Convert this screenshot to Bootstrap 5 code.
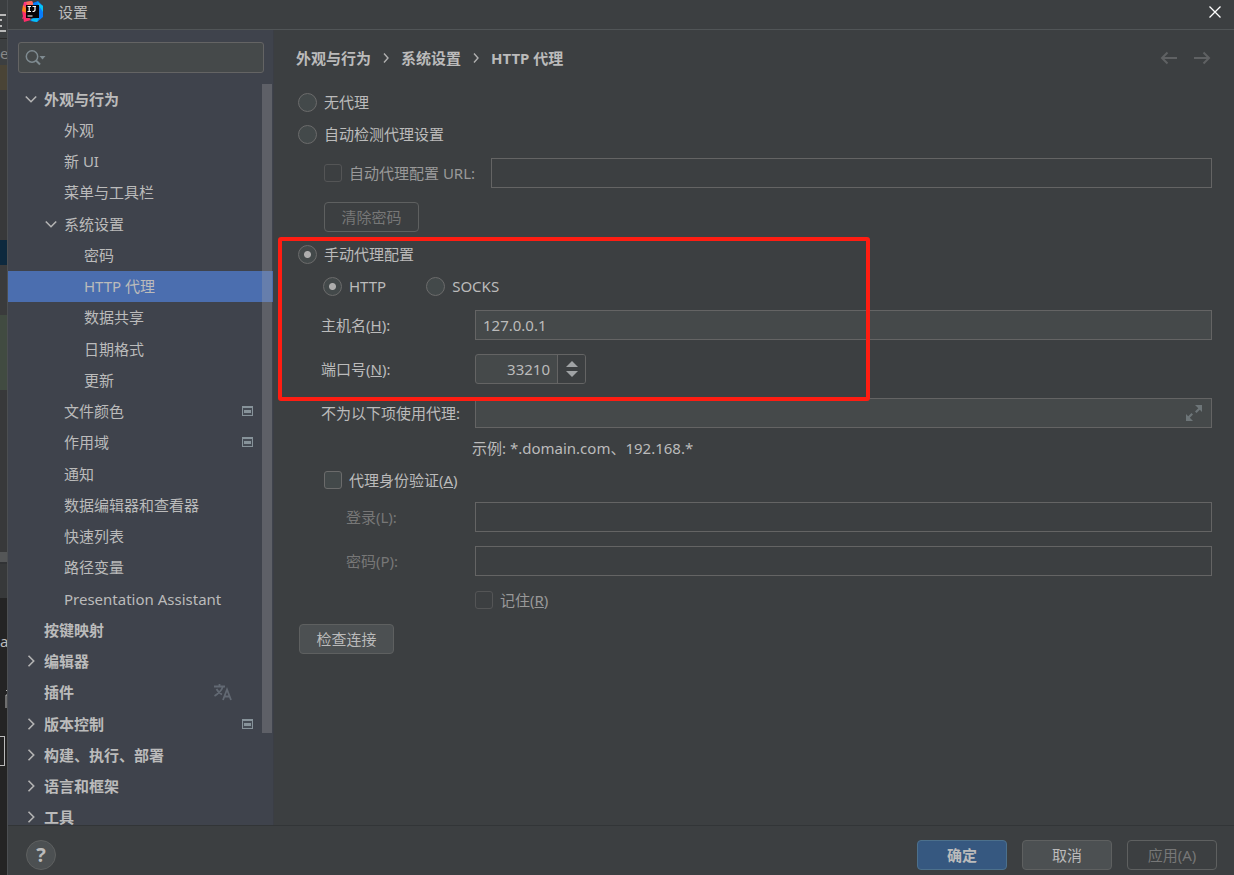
<!DOCTYPE html>
<html lang="zh-CN">
<head>
<meta charset="utf-8">
<meta name="viewport" content="width=device-width, initial-scale=1">
<title>设置</title>
<link href="https://cdn.jsdelivr.net/npm/bootstrap@5.3.0/dist/css/bootstrap.min.css" rel="stylesheet">
<style>
  :root { --panel: #3c3f41; --field: #45494a; --line: #646464; --ink: #bbbbbb; --dim: #777777; }
  body { background: var(--panel); color: var(--ink); font: 15px/20px "Noto Sans", "Noto Sans CJK SC", sans-serif; }
  svg { display: block; flex: none; }

  /* editor window peeking out behind the dialog */
  .editor-edge { width: 7px; background: #242424; overflow: hidden; }
  .editor-edge > div { flex: none; overflow: hidden; }
  .edge-box { height: 30px; width: 5px; border: solid #bbb; border-width: 1px 1px 1px 0; }

  .dialog-pane { border-left: 1px solid #4c4f52; min-width: 0; }
  .title-bar { height: 30px; border-bottom: 1px solid #515557; padding: 0 12px 6px 14px; gap: 14px; }
  .plain-btn { background: none; border: 0; padding: 0; color: inherit; }

  .sidebar { width: 266px; background: #3f434c; border-right: 1px solid #3b3e45; overflow: hidden; }
  .search-wrap { margin: 12px 9px 10px 10px; }
  .search-wrap svg { position: absolute; left: 7px; top: 7px; }
  .search-field { height: 31px; border: 1px solid var(--line); border-radius: 3px; background: var(--field); color: var(--ink); padding: 0 8px 0 32px; }
  .tree { height: 750px; }
  .tree li { flex: 1 1 0; min-height: 0; }
  .tree a { color: var(--ink); text-decoration: none; padding: 0 20px 0 16px; gap: 6px; height: 100%; white-space: nowrap; }
  .tree a::before { content: ""; width: 14px; flex: none; }
  .tree a.branch::before { display: none; }
  .tree .lvl2 { padding-left: 36px; }
  .tree .lvl3 { padding-left: 56px; }
  .tree .top { font-weight: 700; }
  .tree .active { background: #4b6eaf; }
  .scroll-thumb { position: absolute; right: 1px; top: 1px; width: 10px; height: 649px; background: rgba(166,166,166,.3); }

  .page { padding: 0 22px 0 25px; min-width: 0; }
  .crumbs { height: 56px; font-weight: 700; margin-left: -3px; }
  .crumbs a { color: inherit; text-decoration: none; }
  .crumbs .sep { margin: 0 11px; }
  .crumbs .arrows { gap: 15px; color: #5f6163; margin-right: 1px; }
  .line-row { height: 32px; display: flex; align-items: center; }
  .field-row { height: 30px; display: flex; align-items: center; }
  .gap-row { margin-top: 14px; }
  .small-gap { margin-top: 6px; }
  .in1 { padding-left: 25px; }
  .form-check-input { width: 18px; height: 18px; margin: 0 7px 0 0; background-color: #43494a; border: 1px solid #6b6b6b; flex: none; }
  .form-check-input[type=checkbox] { border-radius: 3px; }
  .form-check-input[type=radio] { width: 19px; height: 19px; margin: 0 7px 0 -1px; }
  .form-check-input:checked[type=radio] { background: radial-gradient(circle, #adadad 3px, #43494a 4px); border-color: #6b6b6b; }
  .form-check-input:disabled { background-color: transparent; border-color: #545556; opacity: 1; }
  .form-check-input:disabled ~ label { opacity: 1; color: #999999; }
  .kinds { gap: 41px; }
  .form-control.box, .form-control.box:focus { height: 30px; border: 1px solid var(--line); border-radius: 0; background: var(--field); color: var(--ink); font-size: 15px; line-height: 20px; padding: 0 7px; box-shadow: none; min-width: 0; }
  .form-control.box:disabled { background: transparent; }
  .lab { width: 154px; margin-left: 22px; flex: none; }
  .lab.deep { width: 129px; margin-left: 47px; color: var(--dim); }
  .hint { padding-left: 173px; }
  .keep-row { padding-left: 176px; }
  .spin { width: 111px; height: 30px; border: 1px solid var(--line); border-radius: 3px; background: var(--field); overflow: hidden; }
  .spin input { width: 82px; background: none; border: 0; border-right: 1px solid var(--line); color: var(--ink); text-align: right; padding: 0 7px; }
  .spin .steps { background: var(--panel); }
  .expand-btn { position: absolute; right: 10px; top: 7px; }
  .push { height: 30px; padding: 0 8px; font-size: 15px; line-height: 20px; border: 1px solid #5e6060; border-radius: 4px; background: #4c5052; color: var(--ink); min-width: 90px; }
  .push.wide { min-width: 95px; }
  .push:hover { background: #4c5052; color: var(--ink); border-color: #5e6060; }
  .push.main, .push.main:hover { background: #365880; border-color: #4c708c; font-weight: 700; }
  .push:disabled { background: transparent; border-color: #5e6060; color: var(--dim); opacity: 1; }
  .callout-frame { position: absolute; z-index: 5; left: -21px; top: -1px; width: 592px; height: 164px; border: 4px solid #ff1d12; border-radius: 3px; pointer-events: none; }

  .bottom-bar { height: 50px; border-top: 1px solid #323537; padding: 9px 17px 0 18px; gap: 15px; }
  .help-btn { width: 30px; height: 30px; border-radius: 50%; border: 1px solid #5e6060; background: #4c5052; font-size: 20px; font-weight: 700; line-height: 20px; color: var(--ink); padding: 0; }
</style>
</head>
<body class="d-flex vh-100 overflow-hidden">

<svg width="0" height="0" class="position-absolute" aria-hidden="true">
  <symbol id="down" viewBox="0 0 14 14"><path d="M1.800 4.500L7 9.700l5.200-5.200" fill="none" stroke="#b4b4b4" stroke-width="1.600"/></symbol>
  <symbol id="right" viewBox="0 0 14 14"><path d="M4.500 1.800L9.700 7l-5.200 5.200" fill="none" stroke="#b4b4b4" stroke-width="1.600"/></symbol>
  <symbol id="proj" viewBox="0 0 11 10"><path d="M0 0h11v10H0z" fill="#87939a"/><path d="M1 2h9v7H1z" fill="#454b54"/><path d="M2 4h7v3H2z" fill="#87939a"/></symbol>
  <symbol id="sep" viewBox="0 0 8 12"><path d="M2 1.500L6 6l-4 4.500" fill="none" stroke="#b0b0b0" stroke-width="1.400"/></symbol>
</svg>

<aside class="editor-edge d-flex flex-column flex-shrink-0" aria-hidden="true">
  <div style="height:39px;background:#3c3f41;border-bottom:1px solid #2b2b2b"><svg width="7" height="39"><path d="M0 15h6M0 31h6M0 20h2M0 26h2" stroke="#b9b9b9" stroke-width="2"/></svg></div>
  <div style="height:26px;background:#3c3f41;line-height:28px;color:#888">e</div>
  <div style="height:25px;background:#4a4436"></div>
  <div style="height:150px;background:#38393a"></div>
  <div style="height:25px;background:#0d293e"></div>
  <div style="height:50px;background:#3a3b3c"></div>
  <div style="height:75px;background:#414b41"></div>
  <div style="height:162px;background:#38393a"></div>
  <div style="height:10px;background:#545657"></div>
  <div style="height:36px;background:#37393a;border-top:2px solid #313335"></div>
  <div style="height:88px;line-height:86px;color:#bbb">a</div>
  <div style="height:50px"><svg width="7" height="22"><path d="M6 22V9h1M6 4.500h1" stroke="#b9b9b9" fill="none"/></svg></div>
  <div class="edge-box"></div>
</aside>

<div class="dialog-pane d-flex flex-column flex-grow-1">
  <header class="title-bar d-flex align-items-center flex-shrink-0">
    <svg width="22" height="22" viewBox="0 0 22 22" aria-hidden="true">
      <path d="M2 1l8-1 3 6-6 9-7 3 2-6-1-7z" fill="#f9397f"/>
      <path d="M1 4l3 3v8l-4-5z" fill="#fc801d"/>
      <path d="M0 10l4 2 5 7-7 2z" fill="#fd2d6a"/>
      <path d="M4 1l6-1 2 5-6 1z" fill="#fe6c5a"/>
      <path d="M11 2l5-2 5 5v11l-6 5-7-1 4-4z" fill="#087cfa"/>
      <path d="M15 1l6 4v6l-4-6zM9 18l8-1-2 4-5-1z" fill="#07c3f2"/>
      <path d="M4 4h13v13H4z" fill="#080508"/>
      <path d="M5.500 5.500h3.500M7.200 5.500v5M5.500 10.500h3.500M10.500 5.500h3.500M13 5.500V9q0 1.500-2.500 1.500M5.500 15h5" stroke="#fff" stroke-width="1.200" fill="none"/>
    </svg>
    <span>设置</span>
    <button class="plain-btn ms-auto" type="button" aria-label="关闭"><svg width="14" height="14" viewBox="0 0 14 14"><path d="M1.500 1.500l11 11M12.500 1.500l-11 11" stroke="#fff" stroke-width="1.300"/></svg></button>
  </header>

  <div class="d-flex flex-grow-1 overflow-hidden">
    <nav class="sidebar flex-shrink-0" aria-label="设置分类">
      <div class="search-wrap position-relative">
        <input class="search-field w-100 d-block" type="text" aria-label="搜索">
        <svg width="22" height="18" viewBox="0 0 22 18" aria-hidden="true"><circle cx="7" cy="7.500" r="5.700" fill="none" stroke="#7f8b91" stroke-width="1.500"/><path d="M11 11.500l4 4" stroke="#7f8b91" stroke-width="2"/><path d="M14.500 7h6l-3 3.500z" fill="#7f8b91"/></svg>
      </div>
      <div class="position-relative">
        <ul class="tree list-unstyled m-0 d-flex flex-column">
          <li><a href="#" class="branch top d-flex align-items-center"><svg width="14" height="14"><use href="#down"/></svg>外观与行为</a></li>
          <li><a href="#" class="lvl2 d-flex align-items-center">外观</a></li>
          <li><a href="#" class="lvl2 d-flex align-items-center">新 UI</a></li>
          <li><a href="#" class="lvl2 d-flex align-items-center">菜单与工具栏</a></li>
          <li><a href="#" class="branch lvl2 d-flex align-items-center"><svg width="14" height="14"><use href="#down"/></svg>系统设置</a></li>
          <li><a href="#" class="lvl3 d-flex align-items-center">密码</a></li>
          <li><a href="#" class="lvl3 active d-flex align-items-center" aria-current="page">HTTP 代理</a></li>
          <li><a href="#" class="lvl3 d-flex align-items-center">数据共享</a></li>
          <li><a href="#" class="lvl3 d-flex align-items-center">日期格式</a></li>
          <li><a href="#" class="lvl3 d-flex align-items-center">更新</a></li>
          <li><a href="#" class="lvl2 d-flex align-items-center">文件颜色<svg class="ms-auto" width="11" height="10"><use href="#proj"/></svg></a></li>
          <li><a href="#" class="lvl2 d-flex align-items-center">作用域<svg class="ms-auto" width="11" height="10"><use href="#proj"/></svg></a></li>
          <li><a href="#" class="lvl2 d-flex align-items-center">通知</a></li>
          <li><a href="#" class="lvl2 d-flex align-items-center">数据编辑器和查看器</a></li>
          <li><a href="#" class="lvl2 d-flex align-items-center">快速列表</a></li>
          <li><a href="#" class="lvl2 d-flex align-items-center">路径变量</a></li>
          <li><a href="#" class="lvl2 d-flex align-items-center">Presentation Assistant</a></li>
          <li><a href="#" class="top d-flex align-items-center">按键映射</a></li>
          <li><a href="#" class="branch top d-flex align-items-center"><svg width="14" height="14"><use href="#right"/></svg>编辑器</a></li>
          <li><a href="#" class="top d-flex align-items-center">插件<svg class="ms-auto me-3" width="24" height="18" viewBox="0 0 24 18"><path d="M1 3.500h11M6.500 1v2.500M10 3.500Q8 9 1.500 13M3.500 6q2 4 5.500 5.500M10 17l4-10.500L18 17M11.500 13.500h5" fill="none" stroke="#626973" stroke-width="1.800"/></svg></a></li>
          <li><a href="#" class="branch top d-flex align-items-center"><svg width="14" height="14"><use href="#right"/></svg>版本控制<svg class="ms-auto" width="11" height="10"><use href="#proj"/></svg></a></li>
          <li><a href="#" class="branch top d-flex align-items-center"><svg width="14" height="14"><use href="#right"/></svg>构建、执行、部署</a></li>
          <li><a href="#" class="branch top d-flex align-items-center"><svg width="14" height="14"><use href="#right"/></svg>语言和框架</a></li>
          <li><a href="#" class="branch top d-flex align-items-center"><svg width="14" height="14"><use href="#right"/></svg>工具</a></li>
        </ul>
        <div class="scroll-thumb"></div>
      </div>
    </nav>

    <main class="page flex-grow-1">
      <div class="crumbs d-flex align-items-center">
        <a href="#">外观与行为</a><svg class="sep" width="8" height="12"><use href="#sep"/></svg><a href="#">系统设置</a><svg class="sep" width="8" height="12"><use href="#sep"/></svg><span>HTTP 代理</span>
        <div class="arrows d-flex ms-auto">
          <button class="plain-btn" type="button" aria-label="后退"><svg width="18" height="14" viewBox="0 0 18 14"><path d="M17 7H2M7.500 1.500L2 7l5.500 5.500" fill="none" stroke="currentColor" stroke-width="2"/></svg></button>
          <button class="plain-btn" type="button" aria-label="前进"><svg width="18" height="14" viewBox="0 0 18 14"><path d="M1 7h15M10.500 1.500L16 7l-5.500 5.500" fill="none" stroke="currentColor" stroke-width="2"/></svg></button>
        </div>
      </div>

      <form>
        <div class="line-row"><input class="form-check-input" type="radio" name="mode" id="none"><label for="none">无代理</label></div>
        <div class="line-row"><input class="form-check-input" type="radio" name="mode" id="auto"><label for="auto">自动检测代理设置</label></div>
        <div class="field-row in1 mt-2">
          <input class="form-check-input" type="checkbox" id="pac" disabled><label for="pac" class="text-nowrap">自动代理配置 URL:</label>
          <input class="form-control box ms-3" type="text" aria-label="自动代理配置 URL" disabled>
        </div>
        <div class="gap-row in1"><button class="btn push wide" type="button" disabled>清除密码</button></div>

        <div class="position-relative small-gap">
          <div class="line-row"><input class="form-check-input" type="radio" name="mode" id="manual" checked><label for="manual">手动代理配置</label></div>
          <div class="line-row in1 kinds">
            <div class="d-flex align-items-center"><input class="form-check-input" type="radio" name="kind" id="http" checked><label for="http">HTTP</label></div>
            <div class="d-flex align-items-center"><input class="form-check-input" type="radio" name="kind" id="socks"><label for="socks">SOCKS</label></div>
          </div>
          <div class="field-row mt-2"><label class="lab" for="host">主机名(<u>H</u>):</label><input class="form-control box" id="host" type="text" value="127.0.0.1"></div>
          <div class="field-row gap-row"><label class="lab" for="port">端口号(<u>N</u>):</label>
            <div class="spin d-flex">
              <input id="port" type="text" inputmode="numeric" value="33210">
              <div class="steps flex-grow-1 d-flex flex-column align-items-center justify-content-center gap-1">
                <button class="plain-btn" type="button" aria-label="增加"><svg width="12" height="6"><path d="M0 6l6-6 6 6z" fill="#a0a3a5"/></svg></button>
                <button class="plain-btn" type="button" aria-label="减少"><svg width="12" height="6"><path d="M0 0l6 6 6-6z" fill="#a0a3a5"/></svg></button>
              </div>
            </div>
          </div>
          <div class="callout-frame"></div>
        </div>

        <div class="field-row gap-row"><label class="lab" for="except">不为以下项使用代理:</label>
          <div class="position-relative flex-grow-1">
            <input class="form-control box" id="except" type="text">
            <button class="plain-btn expand-btn" type="button" aria-label="展开"><svg width="16" height="16" viewBox="0 0 16 16"><path d="M9 0h7v7l-2.200-2.200-3.300 3.300-1.500-1.500 3.300-3.300zM0 9l2.200 2.200L5.500 8 7 9.500l-3.200 3.300L7 16H0z" fill="#6d7578"/></svg></button>
          </div>
        </div>
        <div class="line-row hint mt-1">示例: *.domain.com、192.168.*</div>
        <div class="line-row in1"><input class="form-check-input" type="checkbox" id="auth"><label for="auth">代理身份验证(<u>A</u>)</label></div>
        <div class="field-row small-gap"><label class="lab deep" for="login">登录(L):</label><input class="form-control box" id="login" type="text" disabled></div>
        <div class="field-row gap-row"><label class="lab deep" for="pass">密码(P):</label><input class="form-control box" id="pass" type="password" disabled></div>
        <div class="line-row keep-row mt-2"><input class="form-check-input" type="checkbox" id="keep" disabled><label for="keep">记住(<u>R</u>)</label></div>
        <button class="btn push wide mt-2" type="button">检查连接</button>
      </form>
    </main>
  </div>

  <footer class="bottom-bar d-flex flex-shrink-0 align-items-center">
    <button class="help-btn me-auto" type="button" aria-label="帮助">?</button>
    <button class="btn push main" type="button">确定</button>
    <button class="btn push" type="button">取消</button>
    <button class="btn push" type="button" disabled>应用(A)</button>
  </footer>
</div>
<script src="https://cdn.jsdelivr.net/npm/bootstrap@5.3.0/dist/js/bootstrap.bundle.min.js"></script>
</body>
</html>
